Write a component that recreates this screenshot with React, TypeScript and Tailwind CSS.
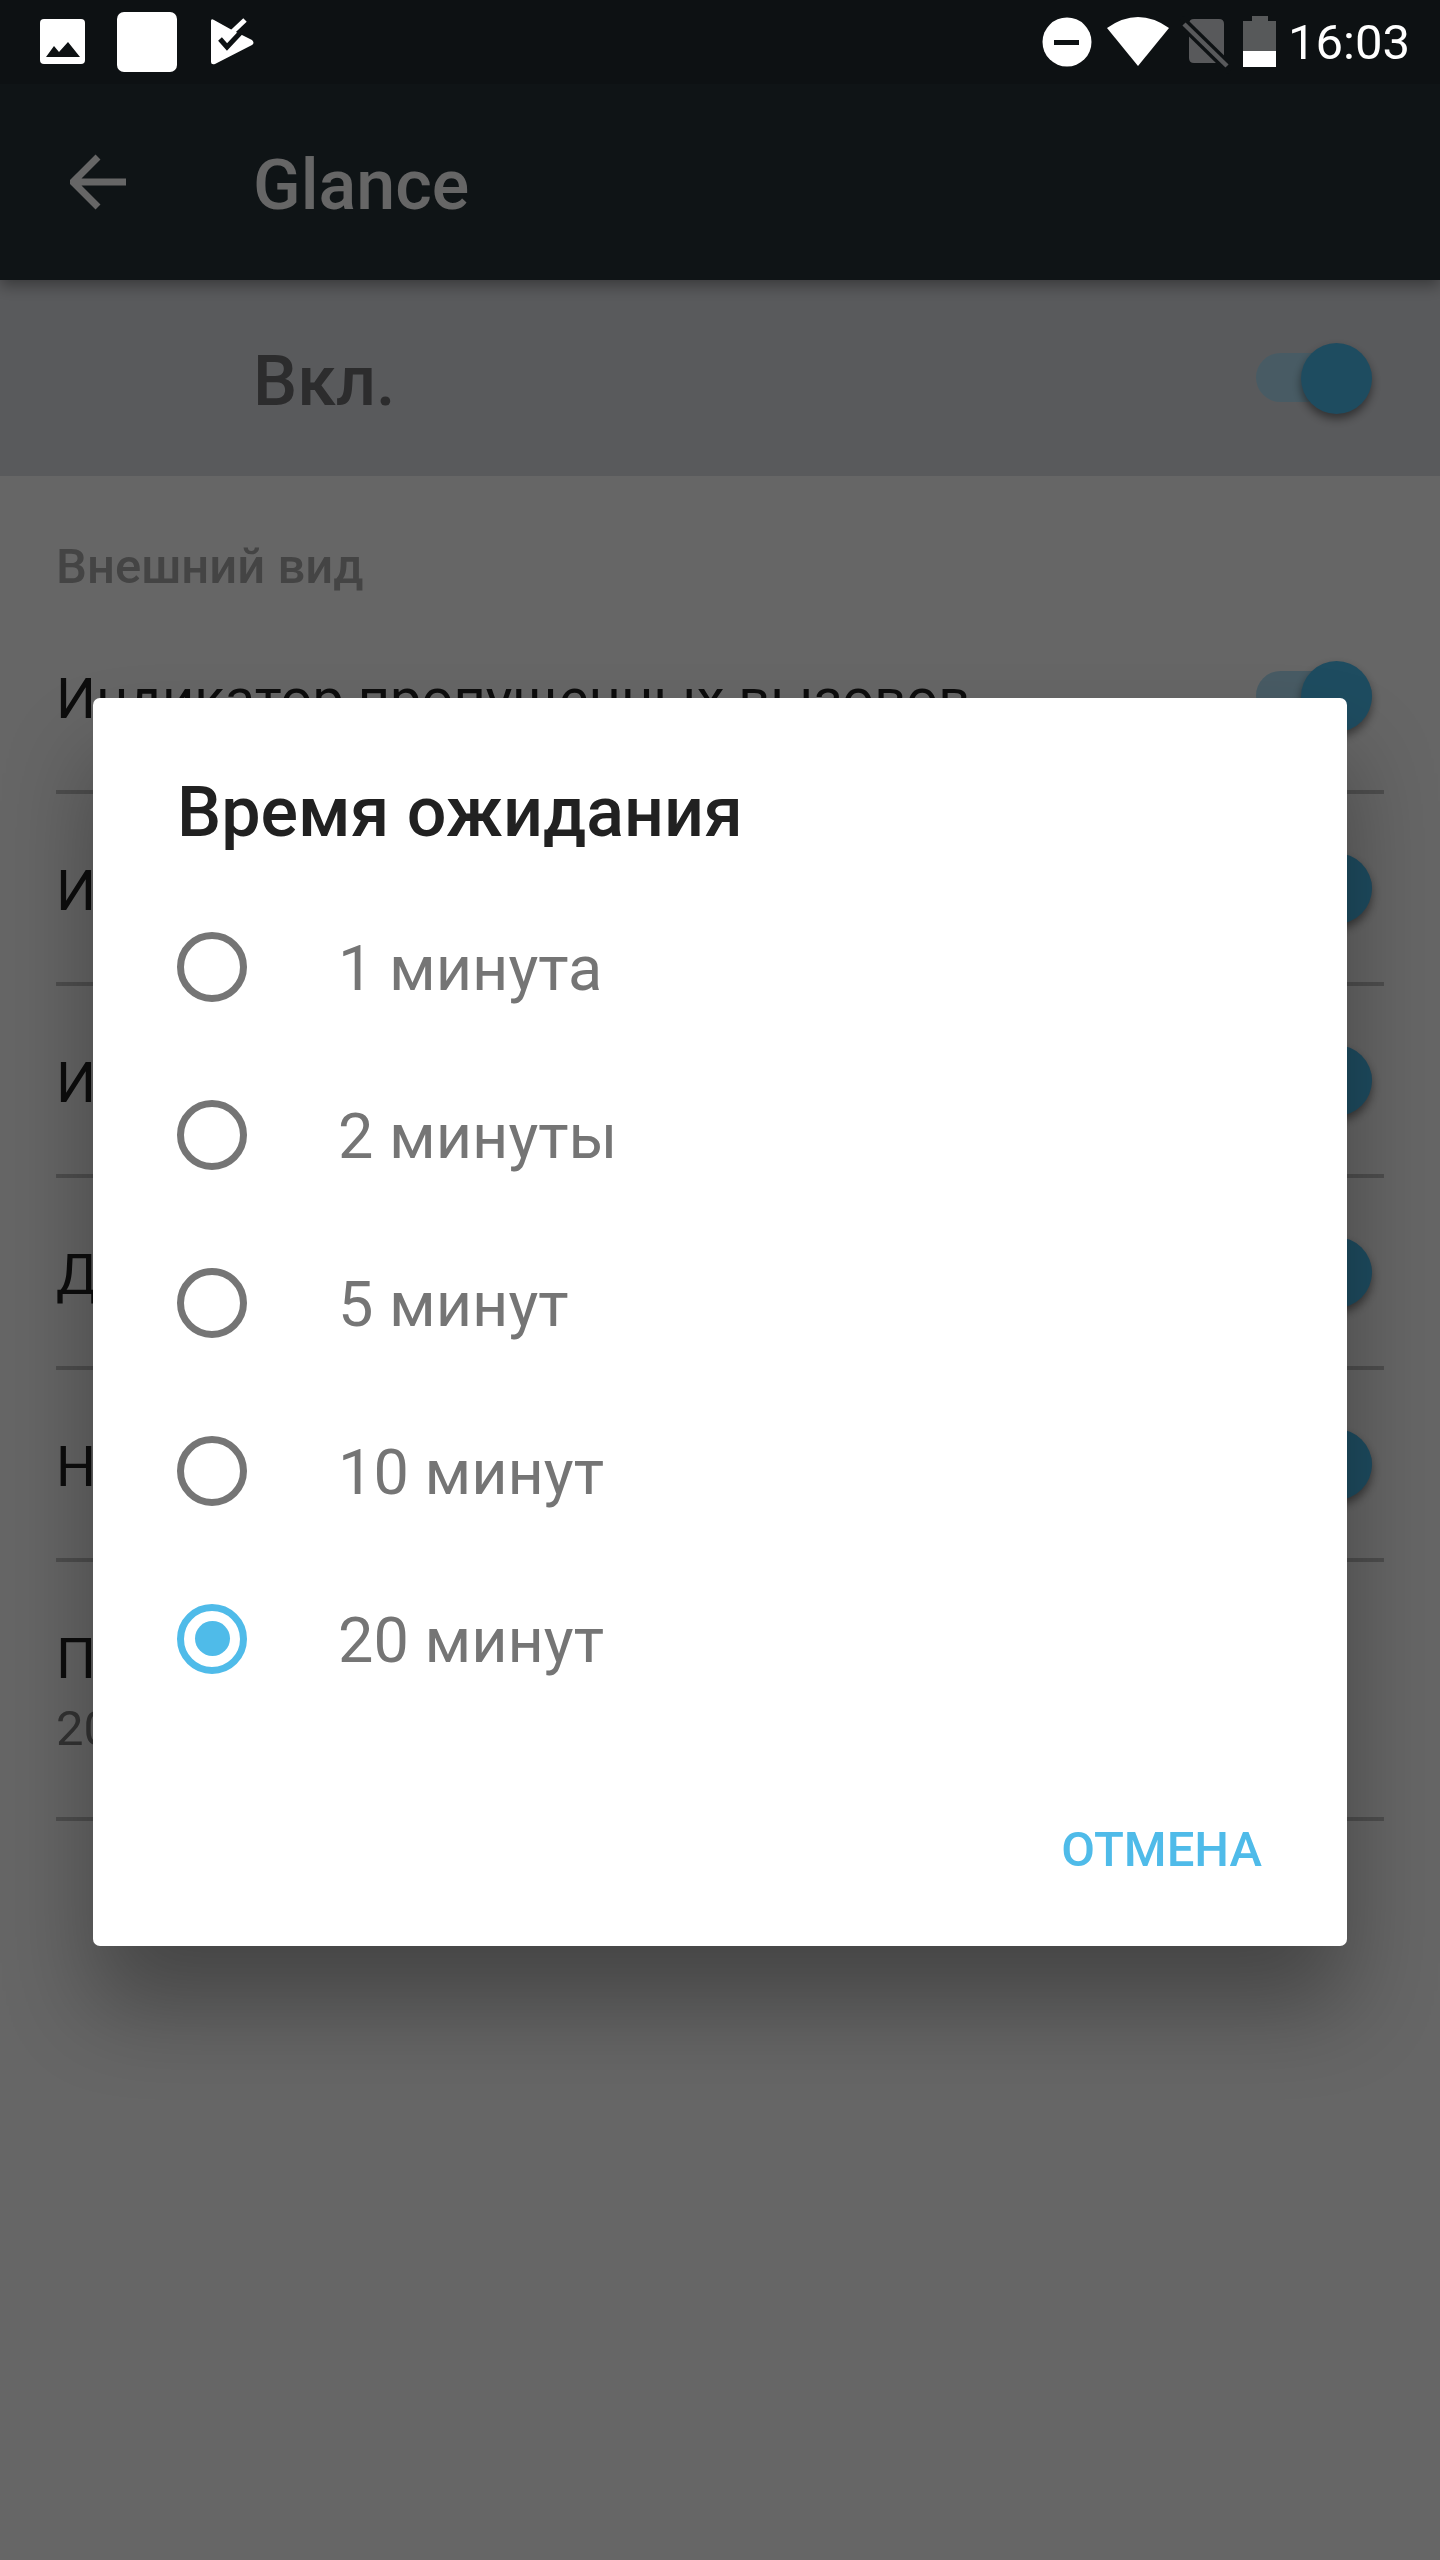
const roboto = "font-['Roboto',sans-serif]";

const backgroundRows = [
  "Индикатор пропущенных вызовов",
  "Индикатор новых сообщений",
  "Индикатор уведомлений",
  "Дата и время",
  "Непрочитанные",
];

const options = ["1 минута", "2 минуты", "5 минут", "10 минут", "20 минут"];

const Toggle = () => (
  <div className="relative h-[71px] w-[116px] shrink-0">
    <div className="absolute left-0 top-[10px] h-[49px] w-[116px] rounded-full bg-[#b4e4fa]" />
    <div className="absolute right-0 top-0 h-[71px] w-[71px] rounded-full bg-[#4dbdf0] shadow-[0_5px_10px_rgba(0,0,0,0.45)]" />
  </div>
);

const Radio = ({ checked }: { checked?: boolean }) => (
  <div
    className={`mb-[3px] flex h-[70px] w-[70px] shrink-0 items-center justify-center rounded-full border-[7px] ${
      checked ? "border-[#4fbbe9]" : "border-[#757575]"
    }`}
  >
    {checked && <div className="h-[35px] w-[35px] rounded-full bg-[#4fbbe9]" />}
  </div>
);

const StatusBar = () => (
  <div className="absolute left-0 top-0 z-30 h-[84px] w-full bg-[#0d1113]">
    <svg className="absolute left-0 top-0" width="270" height="84" viewBox="0 0 270 84">
      <rect x="40" y="19" width="45" height="45" rx="4" fill="#fff" />
      <path d="M46 57 L54 46 L59 52 L68 42 L80 57 Z" fill="#0d1113" />
      <rect x="117" y="12" width="60" height="60" rx="7" fill="#fff" />
      <path d="M211 21 Q211 18 214 20 L232 30 L252 40 Q255 43 252 45 L215 64 Q211 65 211 62 Z" fill="#fff" />
      <path d="M227 37 L245 20" fill="none" stroke="#fff" strokeWidth="5" />
      <path d="M220 39 L227 47 L242 31" fill="none" stroke="#0d1113" strokeWidth="5" />
    </svg>
    <svg className="absolute left-[1040px] top-0" width="200" height="84" viewBox="0 0 200 84">
      <circle cx="27" cy="42" r="24.5" fill="#fff" />
      <rect x="14" y="40" width="25" height="5" fill="#0d1113" />
      <path d="M67 28 Q98 6 129 28 L98 66 Z" fill="#fff" />
      <path d="M149 24 Q149 19 154 19 L179 19 Q184 19 184 24 L184 58 Q184 63 179 63 L154 63 Q149 63 149 58 Z" fill="#58595b" />
      <path d="M140 20 L191 70" stroke="#0d1113" strokeWidth="11" />
      <path d="M144 24 L187 66" stroke="#58595b" strokeWidth="4.5" />
    </svg>
    <div className="absolute left-[1243px] top-[16px] flex h-[51px] w-[33px] flex-col items-center">
      <div className="h-[5px] w-[16px] bg-[#57595a]" />
      <div className="h-[30px] w-full bg-[#57595a]" />
      <div className="h-[16px] w-full bg-white" />
    </div>
    <span className={`${roboto} absolute left-[1288px] top-[15px] text-[49px] leading-[56px] text-white`}>16:03</span>
  </div>
);

export default function App() {
  return (
    <div className={`${roboto} relative h-[2560px] w-[1440px] overflow-hidden bg-white`}>
      <StatusBar />

      <div className="flex h-full flex-col pt-[84px]">
        <header className="z-10 flex h-[196px] shrink-0 items-center bg-[#263238] pl-[70px] shadow-[0_6px_14px_rgba(0,0,0,0.35)]">
          <svg width="56" height="56" viewBox="0 0 56 56" className="shrink-0">
            <path d="M56 28 H4 M28 3 L3 28 L28 53" fill="none" stroke="#fff" strokeWidth="7" />
          </svg>
          <h1 className="ml-[127px] pt-[6px] text-[70px] font-medium leading-none text-white">Glance</h1>
        </header>

        <div className="flex h-[196px] shrink-0 items-center justify-between bg-[#dfe1e6] pl-[253px] pr-[68px]">
          <span className="pt-[6px] text-[70px] font-medium leading-none text-[#6e6e70]">Вкл.</span>
          <Toggle />
        </div>

        <div className="px-[56px]">
          <h2 className="pt-[63px] text-[49px] font-medium leading-[56px] text-[#aaaaaa]">Внешний вид</h2>
          <div className="mt-[7px]">
            {backgroundRows.map((title) => (
              <div key={title} className="flex h-[192px] items-center justify-between border-b-4 border-[#c4c4c4]">
                <span className="pt-[5px] text-[56px] leading-none text-[#212121]">{title}</span>
                <div className="mr-[12px]">
                  <Toggle />
                </div>
              </div>
            ))}
            <div className="flex h-[259px] flex-col justify-center border-b-4 border-[#c4c4c4] pt-[8px]">
              <span className="text-[56px] leading-[70px] text-[#212121]">Подсветка</span>
              <span className="text-[49px] leading-[70px] text-[#808080]">20 минут</span>
            </div>
          </div>
        </div>
      </div>

      {/* scrim + dialog */}
      <div className="absolute inset-0 z-20 bg-black/60" />
      <div className="absolute left-[93px] top-[698px] z-20 flex h-[1248px] w-[1254px] flex-col rounded-[7px] bg-white shadow-[0_60px_90px_rgba(0,0,0,0.32)]">
        <h3 className="pl-[84px] pt-[73px] text-[70px] font-medium leading-[82px] text-[#212121]">Время ожидания</h3>
        <div className="mt-[31px] flex flex-col">
          {options.map((label, i) => (
            <div key={label} className="flex h-[168px] items-center pl-[84px]">
              <Radio checked={i === options.length - 1} />
              <span className="ml-[91px] text-[63px] leading-none text-[#757575]">{label}</span>
            </div>
          ))}
        </div>
        <div className="mt-auto flex justify-end pb-[68px] pr-[85px]">
          <span className="text-[49px] font-medium leading-[56px] text-[#4fbbe9]">ОТМЕНА</span>
        </div>
      </div>
    </div>
  );
}
